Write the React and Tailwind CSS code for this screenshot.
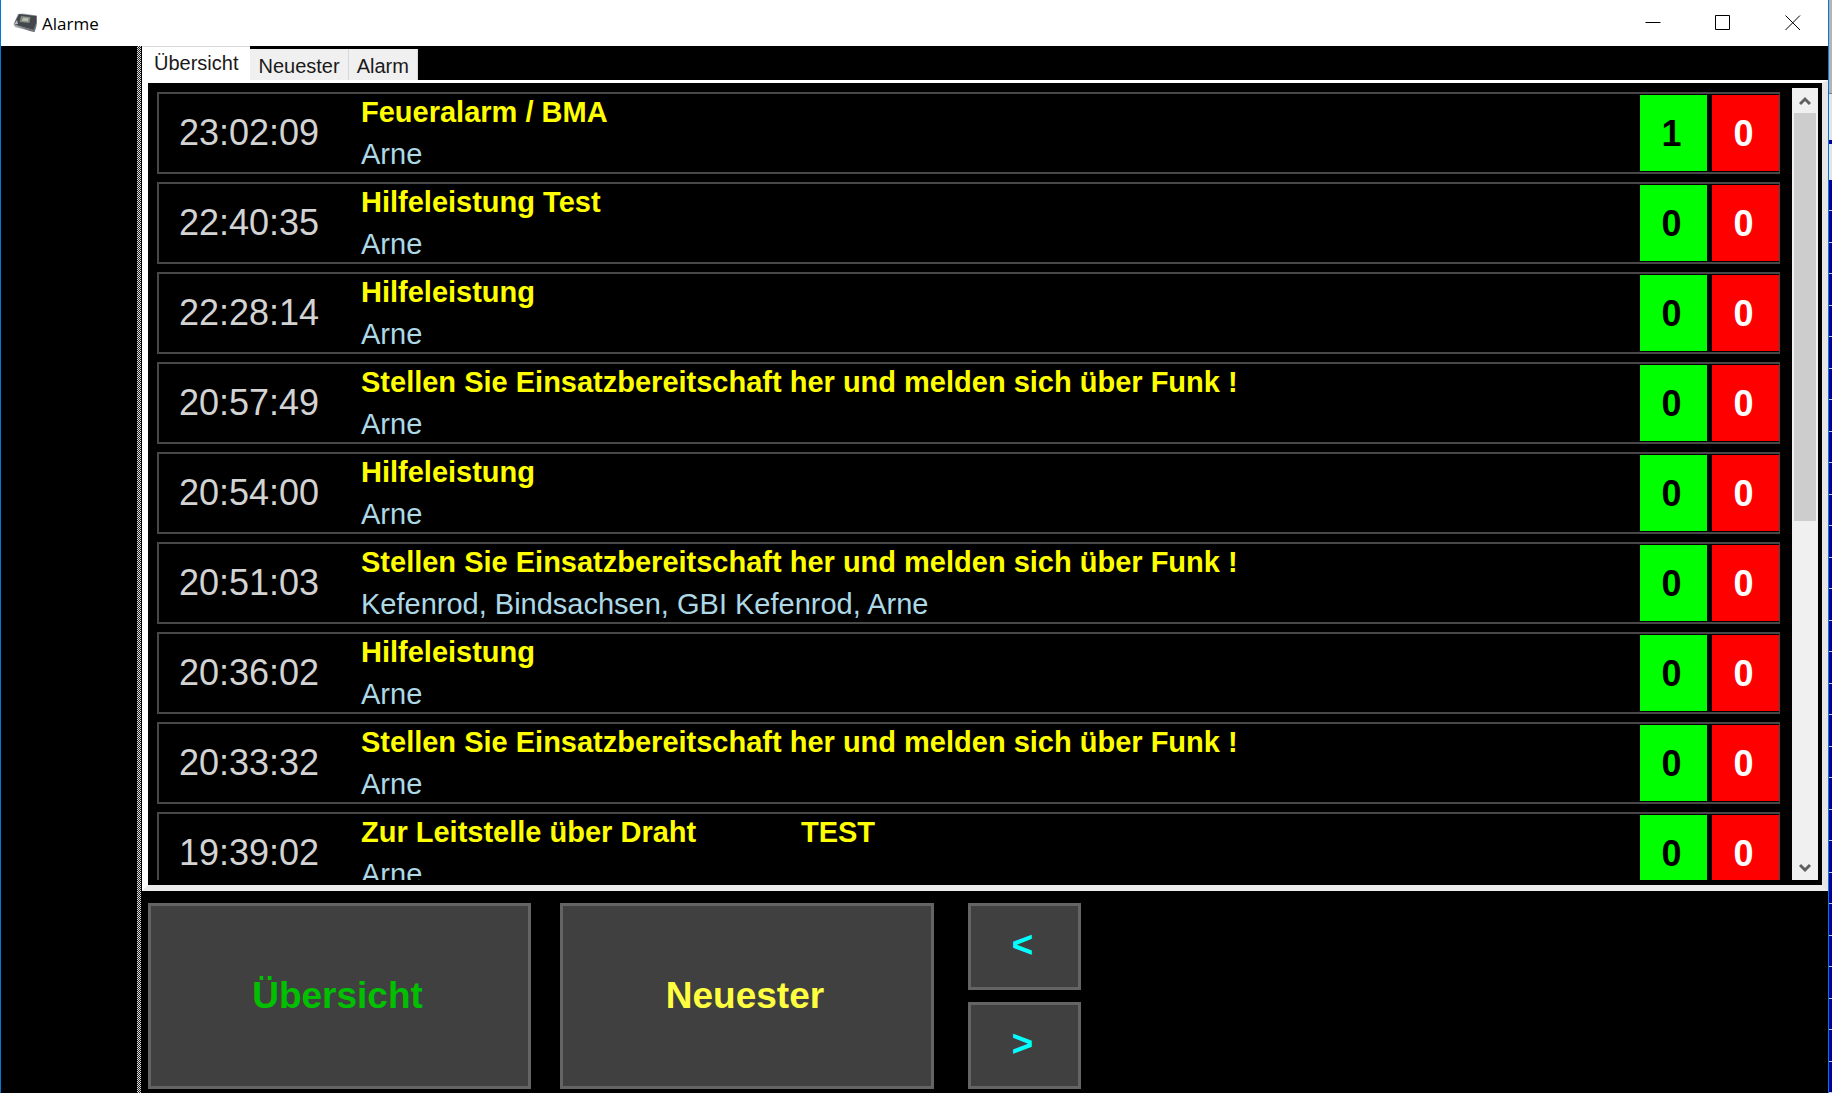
import { useState } from 'react'

const ALARMS = [
  { time: '23:02:09', title: 'Feueralarm / BMA', units: 'Arne', yes: 1, no: 0 },
  { time: '22:40:35', title: 'Hilfeleistung Test', units: 'Arne', yes: 0, no: 0 },
  { time: '22:28:14', title: 'Hilfeleistung', units: 'Arne', yes: 0, no: 0 },
  { time: '20:57:49', title: 'Stellen Sie Einsatzbereitschaft her und melden sich über Funk !', units: 'Arne', yes: 0, no: 0 },
  { time: '20:54:00', title: 'Hilfeleistung', units: 'Arne', yes: 0, no: 0 },
  { time: '20:51:03', title: 'Stellen Sie Einsatzbereitschaft her und melden sich über Funk !', units: 'Kefenrod, Bindsachsen, GBI Kefenrod, Arne', yes: 0, no: 0 },
  { time: '20:36:02', title: 'Hilfeleistung', units: 'Arne', yes: 0, no: 0 },
  { time: '20:33:32', title: 'Stellen Sie Einsatzbereitschaft her und melden sich über Funk !', units: 'Arne', yes: 0, no: 0 },
  { time: '19:39:02', title: 'Zur Leitstelle über Draht             TEST', units: 'Arne', yes: 0, no: 0 },
]

const TABS = ['Übersicht', 'Neuester', 'Alarm']

export default function App() {
  const [tab, setTab] = useState(0)

  return (
    <div className="flex h-screen overflow-hidden bg-black font-['Liberation_Sans',Arial,sans-serif]">
      <div className="flex min-w-0 flex-1 flex-col border-x border-[#0078d7]">
        <TitleBar />
        <div className="flex min-h-0 flex-1">
          <div className="w-[136px] shrink-0" />
          <Splitter />
          <main className="flex min-w-0 flex-1 flex-col">
            <TabBar active={tab} onSelect={setTab} />
            <div className="-mt-[3px] flex min-h-0 flex-1 border-t-[3px] border-r-[6px] border-b-[6px] border-l-[6px] border-t-white border-r-[#e6e6e6] border-b-[#ececec] border-l-white py-[5px] pr-1 pl-[9px]">
              <ul className="flex min-w-0 flex-1 flex-col gap-2 overflow-hidden pt-1">
                {ALARMS.map((alarm) => (
                  <AlarmRow key={alarm.time} alarm={alarm} />
                ))}
              </ul>
              <ScrollBar />
            </div>
            <Controls onSelect={setTab} />
          </main>
        </div>
      </div>
      <Backdrop />
    </div>
  )
}

function TitleBar() {
  return (
    <header className="flex h-[46px] shrink-0 items-center bg-white pl-3">
      <DeviceIcon />
      <h1 className="ml-1 flex-1 pt-px font-['Open_Sans','Noto_Sans',sans-serif] text-[17px] text-black">Alarme</h1>
      <button aria-label="Minimieren" className="grid h-full w-[70px] place-items-center">
        <svg width="16" height="16" viewBox="0 0 16 16" stroke="#000" fill="none">
          <path d="M0.5 7.5H15.5" />
        </svg>
      </button>
      <button aria-label="Maximieren" className="grid h-full w-[70px] place-items-center">
        <svg width="16" height="16" viewBox="0 0 16 16" stroke="#000" fill="none">
          <path d="M0.5 0.5H14.5V14.5H0.5Z" />
        </svg>
      </button>
      <button aria-label="Schließen" className="grid h-full w-[70px] place-items-center">
        <svg width="16" height="16" viewBox="0 0 16 16" stroke="#000" fill="none">
          <path d="M0.5 0.5L15 15M15 0.5L0.5 15" />
        </svg>
      </button>
    </header>
  )
}

/* Pager */
function DeviceIcon() {
  return (
    <svg width="25" height="22" viewBox="0 0 25 22" aria-hidden="true">
      <path d="M5 2L10 1.500L24 3.500V13L21.500 20L17 19L2 15L0.500 12Z" fill="#a4a7ab" />
      <path d="M6 2L23.500 4V11L20.500 18L1.500 12.500L2 10Z" fill="#43464b" />
      <path d="M3 13.500L20.500 18L22.500 12.500L23 15L21.500 20L17 19Z" fill="#6c6f74" />
      <path d="M8 4L17.500 5L16.500 11L6.500 10Z" fill="#7f877d" />
      <path d="M10 5.500L15.500 6L15 9.500L9 9Z" fill="#b4bba9" />
      <path d="M1 12.500L4 8L5 12Z" fill="#b9bcc2" />
    </svg>
  )
}

function Splitter() {
  return (
    <div className="mr-px h-full w-1 shrink-0 bg-[repeating-conic-gradient(#dcdcdc_0_25%,#202020_0_50%)] bg-size-[2px_2px]" />
  )
}

function TabBar({ active, onSelect }) {
  return (
    <div role="tablist" className="flex h-[37px] shrink-0 items-start text-[20px] text-[#1a1a1a]">
      {TABS.map((name, i) => (
        <button
          key={name}
          role="tab"
          aria-selected={active === i}
          onClick={() => onSelect(i)}
          className={
            active === i
              ? 'h-[37px] border-t border-[#d9d9d9] bg-white px-3 pb-1'
              : 'mt-[3px] h-[32px] border-r border-[#d9d9d9] bg-[#f0f0f0] px-2 pt-px'
          }
        >
          {name}
        </button>
      ))}
    </div>
  )
}

function AlarmRow({ alarm }) {
  return (
    <li className="flex h-[82px] shrink-0 items-center border-2 border-r border-[#484848] pl-5">
      <time className="w-[182px] shrink-0 text-[36px] leading-10 text-[#d3d3d3]">{alarm.time}</time>
      <div className="flex min-w-0 flex-1 flex-col gap-2.5 text-[29px] leading-8 whitespace-pre">
        <h2 className="font-bold text-[#ffff00]">{alarm.title}</h2>
        <p className="text-[#add8e6]">{alarm.units}</p>
      </div>
      <div className="flex h-[76px] shrink-0 gap-[5px] text-[36px] font-bold">
        <span className="grid w-[67px] place-items-center bg-[#00ff00] pt-0.5 pr-1 text-black">{alarm.yes}</span>
        <span className="grid w-[67px] place-items-center bg-[#ff0000] pt-0.5 pr-1 text-white">{alarm.no}</span>
      </div>
    </li>
  )
}

function ScrollBar() {
  return (
    <div className="ml-3 flex w-[26px] shrink-0 flex-col bg-[#f0f0f0]">
      <button aria-label="Nach oben" className="grid h-[25px] place-items-center">
        <svg width="12" height="10" viewBox="0 0 12 10" stroke="#606060" strokeWidth="3" fill="none">
          <path d="M1 8L6 3L11 8" />
        </svg>
      </button>
      <div className="flex-1 px-0.5">
        <div className="h-[55%] bg-[#cdcdcd]" />
      </div>
      <button aria-label="Nach unten" className="grid h-[25px] place-items-center">
        <svg width="12" height="10" viewBox="0 0 12 10" stroke="#606060" strokeWidth="3" fill="none">
          <path d="M1 2L6 7L11 2" />
        </svg>
      </button>
    </div>
  )
}

function Controls({ onSelect }) {
  return (
    <div className="flex shrink-0 pt-3 pb-1 pl-1.5 text-[37px] font-bold">
      <button
        onClick={() => onSelect(0)}
        className="h-[186px] w-[383px] border-3 border-[#646464] bg-[#404040] pr-1 text-[#00c000]"
      >
        Übersicht
      </button>
      <button
        onClick={() => onSelect(1)}
        className="ml-[29px] h-[186px] w-[374px] border-3 border-[#646464] bg-[#404040] pr-1 text-[#ffff40]"
      >
        Neuester
      </button>
      <div className="ml-[34px] flex w-[113px] flex-col gap-3 text-[#00ffff]">
        <button aria-label="Zurück" className="flex-1 border-3 border-[#646464] bg-[#404040] pr-1 pb-1">{'<'}</button>
        <button aria-label="Weiter" className="flex-1 border-3 border-[#646464] bg-[#404040] pr-1 pb-1">{'>'}</button>
      </div>
    </div>
  )
}

/* Strip of the window behind */
function Backdrop() {
  return (
    <div className="flex w-[3px] shrink-0 flex-col">
      <div className="h-[93px] bg-[#b4b4b4]" />
      <div className="h-[47px] border-t border-[#808080] bg-[#e4e4e4]" />
      <div className="h-1 bg-[#000096]" />
      <div className="h-9 bg-[#e4e4e4]" />
      <div className="flex flex-1 flex-col bg-[#000096]">
        {Array.from({ length: 29 }, (_, i) => (
          <div key={i} className="flex-1 border-b border-[#c8c8d8]" />
        ))}
      </div>
    </div>
  )
}
